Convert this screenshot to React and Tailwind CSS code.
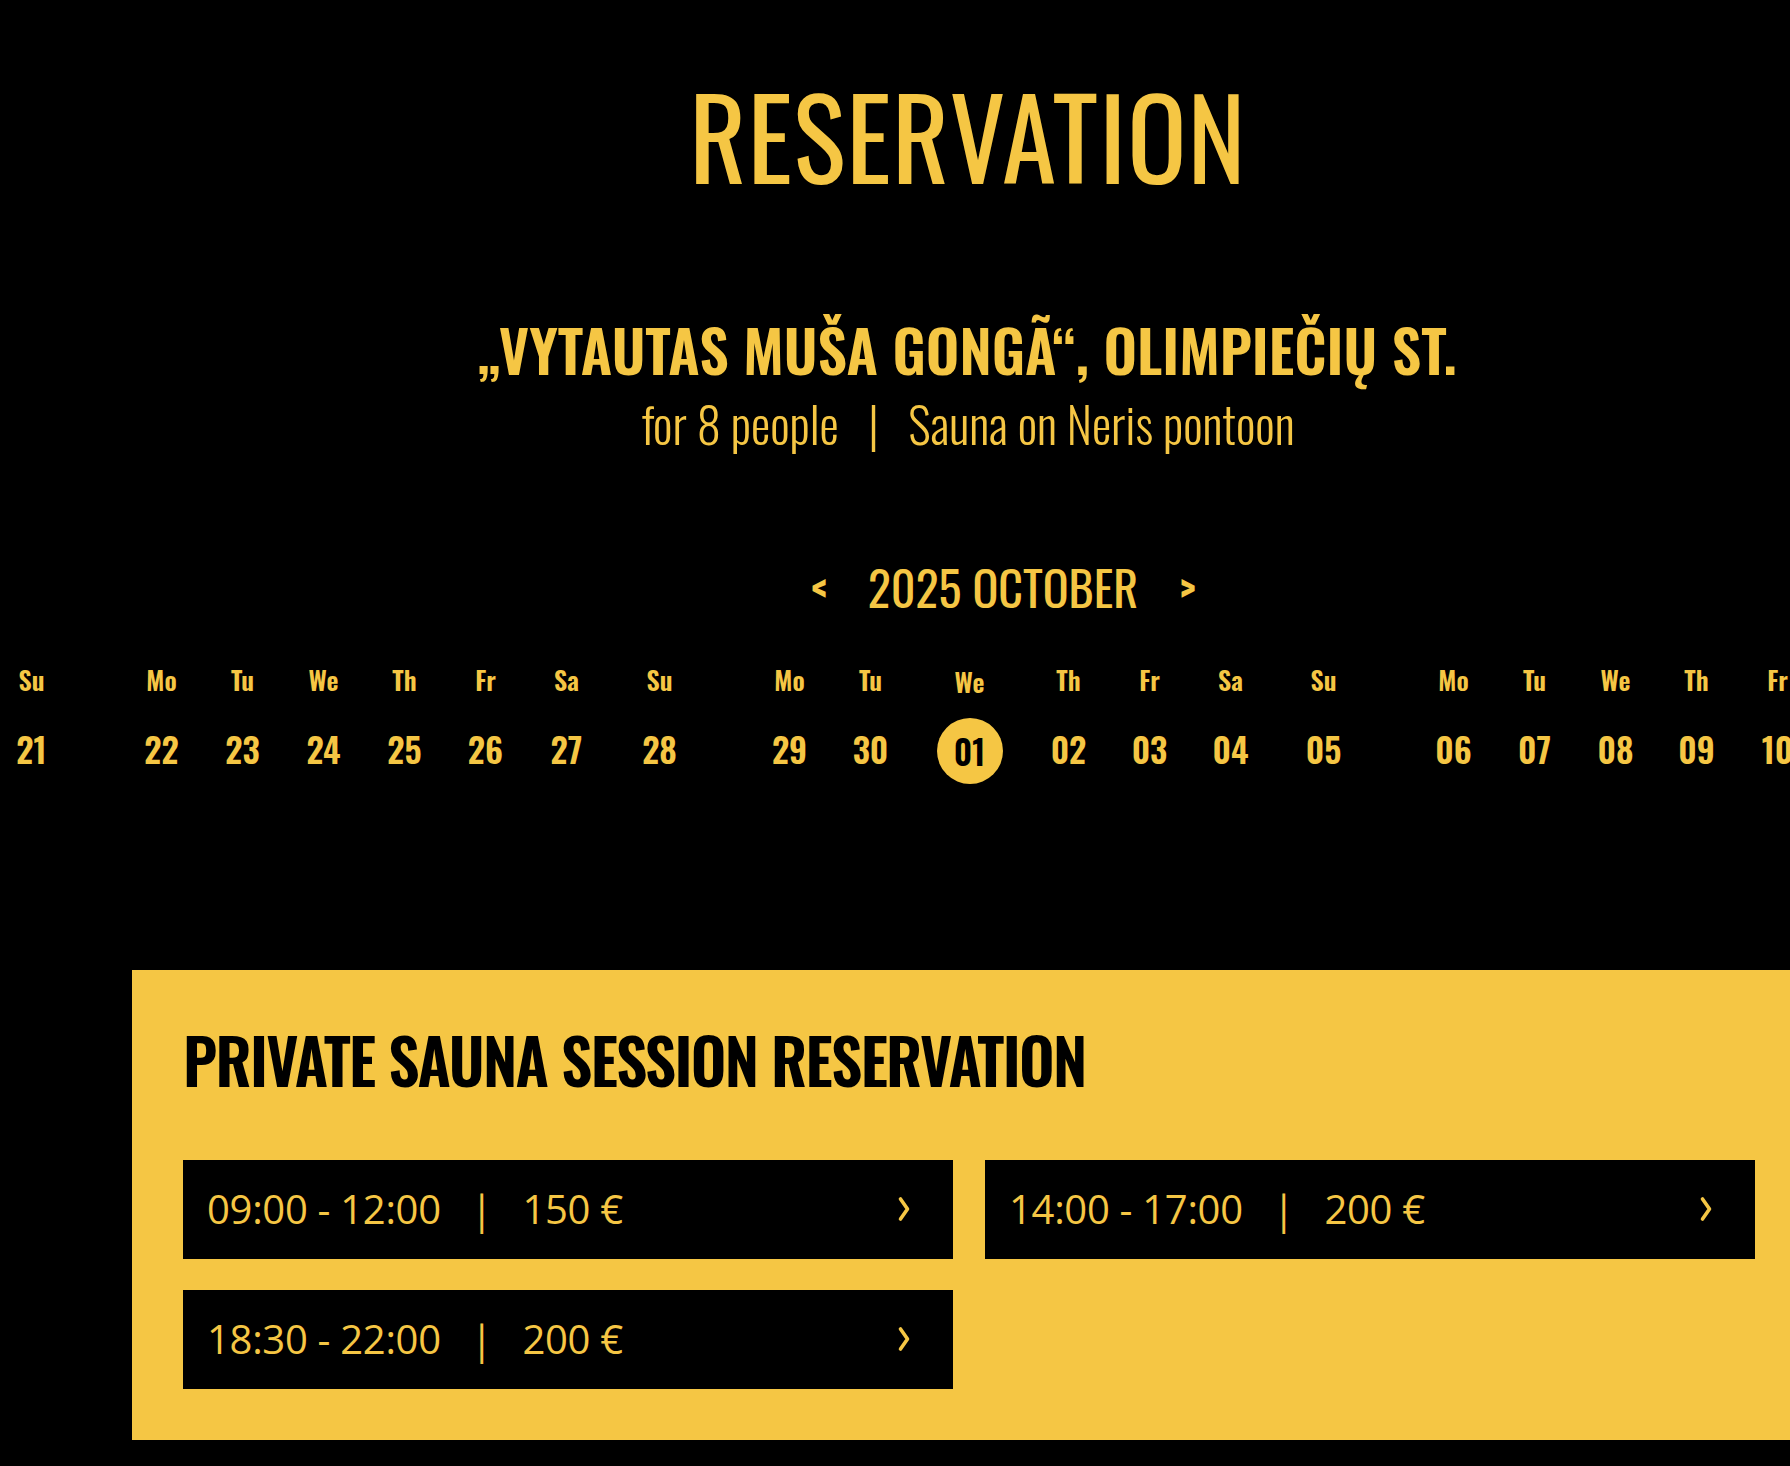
const days = [
  ['Su', '21'], ['Mo', '22'], ['Tu', '23'], ['We', '24'], ['Th', '25'], ['Fr', '26'], ['Sa', '27'],
  ['Su', '28'], ['Mo', '29'], ['Tu', '30'], ['We', '01'], ['Th', '02'], ['Fr', '03'], ['Sa', '04'],
  ['Su', '05'], ['Mo', '06'], ['Tu', '07'], ['We', '08'], ['Th', '09'], ['Fr', '10'], ['Sa', '11'],
  ['Su', '12'], ['Mo', '13'], ['Tu', '14'],
];

const slots = [
  ['09:00 - 12:00', '150 €'],
  ['14:00 - 17:00', '200 €'],
  ['18:30 - 22:00', '200 €'],
];

function Chevron() {
  return (
    <svg width="16" height="28" viewBox="0 0 16 28" fill="none" className="shrink-0">
      <path d="M4.5 4 L11.5 14 L4.5 24" stroke="#f5c644" strokeWidth="3.6" strokeLinecap="round" strokeLinejoin="round" />
    </svg>
  );
}

function DayCell({ name, num, selected }) {
  const isSunday = name === 'Su';
  return (
    <div
      className={`flex w-[81px] shrink-0 flex-col items-center ${isSunday ? 'ml-[12px] mr-[49px]' : ''} ${selected ? 'mx-[18px]' : ''}`}
    >
      <span className={`text-[26px] font-semibold leading-none ${selected ? 'mt-[2px]' : ''}`}>{name}</span>
      <div
        className={`mt-[23px] flex h-[66px] w-[66px] items-center justify-center rounded-full text-[34px] font-semibold leading-none ${selected ? 'bg-[#f5c644] text-black' : ''}`}
      >
        {num}
      </div>
    </div>
  );
}

export default function App() {
  return (
    <div className="min-h-screen w-full overflow-hidden bg-black">
      <div className="w-[1936px] font-['Oswald','Roboto_Condensed',sans-serif] text-[#f5c644]">
        {/* Header */}
        <h1 className="pt-[80px] text-center text-[110px] font-normal leading-none tracking-[1px]">RESERVATION</h1>

        <h2 className="mt-[130px] text-center text-[58.3px] font-semibold leading-none">
          „VYTAUTAS MUŠA GONGÃ“, OLIMPIEČIŲ ST.
        </h2>
        <p className="mt-[21px] text-center text-[48.5px] font-light leading-none">
          for 8 people<span className="mx-[29.5px]">|</span>Sauna on Neris pontoon
        </p>

        {/* Month switcher */}
        <div className="mt-[115px] flex items-center justify-center pl-[70px]">
          <button className="text-[42px] font-bold leading-none">&lt;</button>
          <span className="mx-[41px] text-[48px] font-normal leading-none">2025 OCTOBER</span>
          <button className="text-[42px] font-bold leading-none">&gt;</button>
        </div>

        {/* Days strip */}
        <div className="mt-[56px] -ml-[21px] flex">
          {days.map(([name, num]) => (
            <DayCell key={num} name={name} num={num} selected={num === '01'} />
          ))}
        </div>

        {/* Sessions */}
        <div className="ml-[132px] mt-[186px] w-[1674px] bg-[#f5c644] px-[51px] pb-[51px] pt-[58px]">
          <h3 className="text-[62px] font-semibold leading-none tracking-[-1.7px] text-black">
            PRIVATE SAUNA SESSION RESERVATION
          </h3>
          <div className="mt-[70px] grid grid-cols-2 gap-x-[32px] gap-y-[31px]">
            {slots.map(([time, price]) => (
              <button
                key={time}
                className="flex h-[99px] items-center justify-between bg-black pl-[24px] pr-[41px] font-['Open_Sans',sans-serif] text-[40px] font-normal tracking-[-0.3px] text-[#f5c644]"
              >
                <span>
                  {time}
                  <span className="mx-[30px]">|</span>
                  {price}
                </span>
                <Chevron />
              </button>
            ))}
          </div>
        </div>
      </div>
    </div>
  );
}
